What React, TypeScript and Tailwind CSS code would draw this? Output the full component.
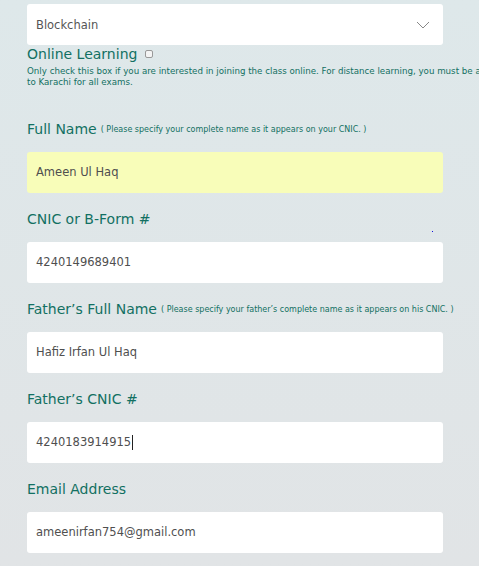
import React from 'react';

const font = { fontFamily: '"DejaVu Sans", "Open Sans", sans-serif' };

const Field = ({
  label,
  note,
  value,
  yellow,
  caret,
}: {
  label: string;
  note?: string;
  value: string;
  yellow?: boolean;
  caret?: boolean;
}) => {
  return (
    <div className="flex flex-col">
      <div className="h-[24px] flex items-center text-[#127062] mt-[14px] whitespace-nowrap">
        <span className="text-[14px]">{label}</span>
        {note && <span className="text-[8px] ml-[4px] mt-[2px]">{note}</span>}
      </div>
      <div
        className={`mt-[11px] h-[41px] w-[416px] rounded-[3px] flex items-center px-[9px] text-[11.5px] text-[#4f4f4f] ${
          yellow ? 'bg-[#f8fdb9]' : 'bg-white'
        }`}
      >
        {value}
        {caret && <span className="w-px h-[15px] bg-[#222] ml-[1px]" />}
      </div>
    </div>
  );
};

export default function App() {
  return (
    <div
      style={font}
      className="w-[479px] h-[566px] overflow-hidden bg-gradient-to-b from-[#dee8ea] to-[#e1e4e6] relative"
    >
      <div className="pl-[27px] pt-[4px] flex flex-col">
        <div className="h-[41px] w-[416px] bg-white rounded-[3px] flex items-center justify-between px-[9px] text-[11.5px] text-[#555]">
          <span className="mt-[2px]">Blockchain</span>
          <svg width="14" height="8" viewBox="0 0 14 8" className="mr-[4px] mt-[1px]">
            <path d="M1 1 L7 7 L13 1" fill="none" stroke="#888" strokeWidth="1" />
          </svg>
        </div>
        <div className="flex items-center text-[#127062] mt-[1px] h-[16px]">
          <span className="text-[14px]">Online Learning</span>
          <span className="ml-[8px] w-[8px] h-[8px] border border-[#999] rounded-[2px] bg-[#f4f4f4]" />
        </div>
        <div className="mt-[4px] text-[8.7px] leading-[11px] text-[#127062] w-[540px] whitespace-nowrap">
          <div>
            Only check this box if you are interested in joining the class online. For distance learning, you must be able to travel
          </div>
          <div>to Karachi for all exams.</div>
        </div>
        <div className="mt-[15px]">
          <Field
            label="Full Name"
            note="( Please specify your complete name as it appears on your CNIC. )"
            value="Ameen Ul Haq"
            yellow
          />
          <Field label="CNIC or B-Form #" value="4240149689401" />
          <Field
            label="Father’s Full Name"
            note="( Please specify your father’s complete name as it appears on his CNIC. )"
            value="Hafiz Irfan Ul Haq"
          />
          <Field label="Father’s CNIC #" value="4240183914915" caret />
          <Field label="Email Address" value="ameenirfan754@gmail.com" />
        </div>
      </div>
      <span className="absolute left-[432px] top-[231px] w-px h-px bg-[#1010e0]" />
    </div>
  );
}
